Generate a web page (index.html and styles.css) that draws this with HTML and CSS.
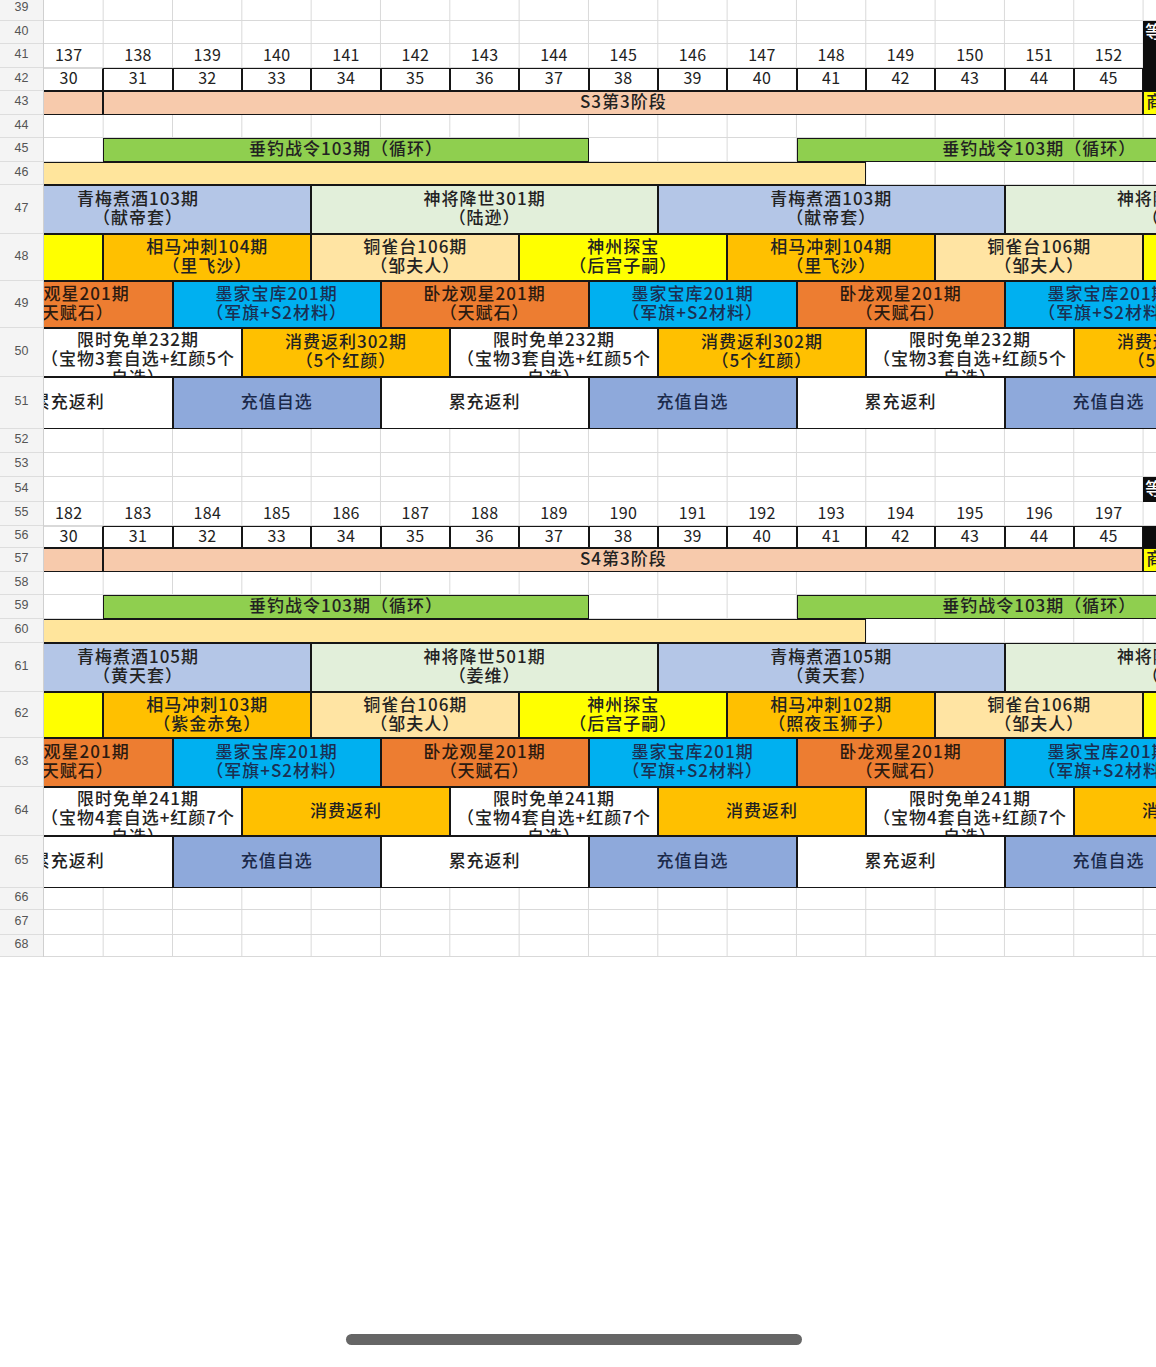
FILE: index.html
```html
<!DOCTYPE html>
<html lang="zh-CN">
<head>
<meta charset="utf-8">
<title>排期表</title>
<link rel="stylesheet" href="styles.css">
</head>
<body>
<div class="page">
  <div class="sheet">
    <div class="rowhdr">
      <div class="rh h24">39</div>
      <div class="rh h23">40</div>
      <div class="rh h24">41</div>
      <div class="rh h23">42</div>
      <div class="rh h24">43</div>
      <div class="rh h23">44</div>
      <div class="rh h24">45</div>
      <div class="rh h23">46</div>
      <div class="rh h49">47</div>
      <div class="rh h47">48</div>
      <div class="rh h47">49</div>
      <div class="rh h49">50</div>
      <div class="rh h52">51</div>
      <div class="rh h24">52</div>
      <div class="rh h24">53</div>
      <div class="rh h25">54</div>
      <div class="rh h24">55</div>
      <div class="rh h22">56</div>
      <div class="rh h24">57</div>
      <div class="rh h23">58</div>
      <div class="rh h24">59</div>
      <div class="rh h24">60</div>
      <div class="rh h49">61</div>
      <div class="rh h46">62</div>
      <div class="rh h49">63</div>
      <div class="rh h49">64</div>
      <div class="rh h52">65</div>
      <div class="rh h22">66</div>
      <div class="rh h25">67</div>
      <div class="rh h22">68</div>
    </div>
    <div class="viewport">
      <div class="grid">
        <!-- 39 -->
        <div class="row h24"></div>
        <!-- 40 -->
        <div class="row h23"><div class="s17"></div><div class="c blk edge">等级</div></div>
        <!-- 41 -->
        <div class="row h24">
          <div></div>
          <div class="c num">137</div><div class="c num">138</div><div class="c num">139</div><div class="c num">140</div>
          <div class="c num">141</div><div class="c num">142</div><div class="c num">143</div><div class="c num">144</div>
          <div class="c num">145</div><div class="c num">146</div><div class="c num">147</div><div class="c num">148</div>
          <div class="c num">149</div><div class="c num">150</div><div class="c num">151</div><div class="c num">152</div>
          <div class="c blk"></div>
        </div>
        <!-- 42 -->
        <div class="row h23">
          <div></div>
          <div class="c num b first">30</div><div class="c num b">31</div><div class="c num b">32</div><div class="c num b">33</div>
          <div class="c num b">34</div><div class="c num b">35</div><div class="c num b">36</div><div class="c num b">37</div>
          <div class="c num b">38</div><div class="c num b">39</div><div class="c num b">40</div><div class="c num b">41</div>
          <div class="c num b">42</div><div class="c num b">43</div><div class="c num b">44</div><div class="c num b">45</div>
          <div class="c blk"></div>
        </div>
        <!-- 43 -->
        <div class="row h24">
          <div></div>
          <div class="c b peach"></div>
          <div class="c b peach s15">S3第3阶段</div>
          <div class="c b yel edge">商店</div>
        </div>
        <!-- 44 -->
        <div class="row h23"></div>
        <!-- 45 -->
        <div class="row h24">
          <div></div><div></div>
          <div class="c b green s7">垂钓战令103期（循环）</div>
          <div></div><div></div><div></div>
          <div class="c b green s7">垂钓战令103期（循环）</div>
        </div>
        <!-- 46 -->
        <div class="row h23"><div class="c b gold s13"></div></div>
        <!-- 47 -->
        <div class="row h49">
          <div class="c b blue s5">青梅煮酒103期<br>（献帝套）</div>
          <div class="c b sage s5">神将降世301期<br>（陆逊）</div>
          <div class="c b blue s5">青梅煮酒103期<br>（献帝套）</div>
          <div class="c b sage s5">神将降世301期<br>（陆逊）</div>
        </div>
        <!-- 48 -->
        <div class="row h47">
          <div class="c b yel s2"></div>
          <div class="c b org s3">相马冲刺104期<br>（里飞沙）</div>
          <div class="c b tan s3">铜雀台106期<br>（邹夫人）</div>
          <div class="c b yel s3">神州探宝<br>（后宫子嗣）</div>
          <div class="c b org s3">相马冲刺104期<br>（里飞沙）</div>
          <div class="c b tan s3">铜雀台106期<br>（邹夫人）</div>
          <div class="c b yel s3">神州探宝<br>（后宫子嗣）</div>
        </div>
        <!-- 49 -->
        <div class="row h47">
          <div class="c b rust s3">卧龙观星201期<br>（天赋石）</div>
          <div class="c b cyan s3">墨家宝库201期<br>（军旗+S2材料）</div>
          <div class="c b rust s3">卧龙观星201期<br>（天赋石）</div>
          <div class="c b cyan s3">墨家宝库201期<br>（军旗+S2材料）</div>
          <div class="c b rust s3">卧龙观星201期<br>（天赋石）</div>
          <div class="c b cyan s3">墨家宝库201期<br>（军旗+S2材料）</div>
        </div>
        <!-- 50 -->
        <div class="row h49">
          <div class="c b org"></div>
          <div class="c b wht s3 top">限时免单232期<br>（宝物3套自选+红颜5个<br>自选）</div>
          <div class="c b org s3">消费返利302期<br>（5个红颜）</div>
          <div class="c b wht s3 top">限时免单232期<br>（宝物3套自选+红颜5个<br>自选）</div>
          <div class="c b org s3">消费返利302期<br>（5个红颜）</div>
          <div class="c b wht s3 top">限时免单232期<br>（宝物3套自选+红颜5个<br>自选）</div>
          <div class="c b org s3">消费返利302期<br>（5个红颜）</div>
        </div>
        <!-- 51 -->
        <div class="row h52">
          <div class="c b wht s3">累充返利</div>
          <div class="c b navy s3">充值自选</div>
          <div class="c b wht s3">累充返利</div>
          <div class="c b navy s3">充值自选</div>
          <div class="c b wht s3">累充返利</div>
          <div class="c b navy s3">充值自选</div>
        </div>
        <!-- 52 -->
        <div class="row h24"></div>
        <!-- 53 -->
        <div class="row h24"></div>
        <!-- 54 -->
        <div class="row h25"><div class="s17"></div><div class="c blk edge">等级</div></div>
        <!-- 55 -->
        <div class="row h24">
          <div></div>
          <div class="c num">182</div><div class="c num">183</div><div class="c num">184</div><div class="c num">185</div>
          <div class="c num">186</div><div class="c num">187</div><div class="c num">188</div><div class="c num">189</div>
          <div class="c num">190</div><div class="c num">191</div><div class="c num">192</div><div class="c num">193</div>
          <div class="c num">194</div><div class="c num">195</div><div class="c num">196</div><div class="c num">197</div>
        </div>
        <!-- 56 -->
        <div class="row h22">
          <div></div>
          <div class="c num b first">30</div><div class="c num b">31</div><div class="c num b">32</div><div class="c num b">33</div>
          <div class="c num b">34</div><div class="c num b">35</div><div class="c num b">36</div><div class="c num b">37</div>
          <div class="c num b">38</div><div class="c num b">39</div><div class="c num b">40</div><div class="c num b">41</div>
          <div class="c num b">42</div><div class="c num b">43</div><div class="c num b">44</div><div class="c num b">45</div>
          <div class="c blk"></div>
        </div>
        <!-- 57 -->
        <div class="row h24">
          <div></div>
          <div class="c b peach"></div>
          <div class="c b peach s15">S4第3阶段</div>
          <div class="c b yel edge">商店</div>
        </div>
        <!-- 58 -->
        <div class="row h23"></div>
        <!-- 59 -->
        <div class="row h24">
          <div></div><div></div>
          <div class="c b green s7">垂钓战令103期（循环）</div>
          <div></div><div></div><div></div>
          <div class="c b green s7">垂钓战令103期（循环）</div>
        </div>
        <!-- 60 -->
        <div class="row h24"><div class="c b gold s13"></div></div>
        <!-- 61 -->
        <div class="row h49">
          <div class="c b blue s5">青梅煮酒105期<br>（黄天套）</div>
          <div class="c b sage s5">神将降世501期<br>（姜维）</div>
          <div class="c b blue s5">青梅煮酒105期<br>（黄天套）</div>
          <div class="c b sage s5">神将降世501期<br>（姜维）</div>
        </div>
        <!-- 62 -->
        <div class="row h46">
          <div class="c b yel s2"></div>
          <div class="c b org s3">相马冲刺103期<br>（紫金赤兔）</div>
          <div class="c b tan s3">铜雀台106期<br>（邹夫人）</div>
          <div class="c b yel s3">神州探宝<br>（后宫子嗣）</div>
          <div class="c b org s3">相马冲刺102期<br>（照夜玉狮子）</div>
          <div class="c b tan s3">铜雀台106期<br>（邹夫人）</div>
          <div class="c b yel s3">神州探宝<br>（后宫子嗣）</div>
        </div>
        <!-- 63 -->
        <div class="row h49">
          <div class="c b rust s3">卧龙观星201期<br>（天赋石）</div>
          <div class="c b cyan s3">墨家宝库201期<br>（军旗+S2材料）</div>
          <div class="c b rust s3">卧龙观星201期<br>（天赋石）</div>
          <div class="c b cyan s3">墨家宝库201期<br>（军旗+S2材料）</div>
          <div class="c b rust s3">卧龙观星201期<br>（天赋石）</div>
          <div class="c b cyan s3">墨家宝库201期<br>（军旗+S2材料）</div>
        </div>
        <!-- 64 -->
        <div class="row h49">
          <div class="c b org"></div>
          <div class="c b wht s3 top">限时免单241期<br>（宝物4套自选+红颜7个<br>自选）</div>
          <div class="c b org s3">消费返利</div>
          <div class="c b wht s3 top">限时免单241期<br>（宝物4套自选+红颜7个<br>自选）</div>
          <div class="c b org s3">消费返利</div>
          <div class="c b wht s3 top">限时免单241期<br>（宝物4套自选+红颜7个<br>自选）</div>
          <div class="c b org s3">消费返利</div>
        </div>
        <!-- 65 -->
        <div class="row h52">
          <div class="c b wht s3">累充返利</div>
          <div class="c b navy s3">充值自选</div>
          <div class="c b wht s3">累充返利</div>
          <div class="c b navy s3">充值自选</div>
          <div class="c b wht s3">累充返利</div>
          <div class="c b navy s3">充值自选</div>
        </div>
        <!-- 66-68 -->
        <div class="row h22"></div>
        <div class="row h25"></div>
        <div class="row h22"></div>
      </div>
    </div>
  </div>
  <div class="homebar"></div>
</div>
</body>
</html>
```

FILE: styles.css
```css
* { box-sizing: border-box; }

body {
  margin: 0;
  background: #ffffff;
  font-family: "Noto Sans CJK SC", "Noto Sans", sans-serif;
  color: #222222;
}

.page {
  width: 1156px;
  height: 1367px;
  overflow: hidden;
}

.sheet {
  display: flex;
  margin-top: -3px;
}

.rowhdr {
  width: 44px;
  flex: none;
  background: #f4f4f4;
  border-right: 1px solid #d0d0d0;
}

.rh {
  display: flex;
  align-items: center;
  justify-content: center;
  font-family: "Liberation Sans", "Noto Sans", sans-serif;
  font-size: 12.5px;
  color: #555555;
  border-bottom: 1px solid #dddddd;
  padding-bottom: 3px;
}

.viewport {
  flex: 1;
  overflow: hidden;
}

.grid {
  width: 1526px;
  margin-left: -79.33px;
}

.row {
  display: grid;
  grid-template-columns: repeat(22, 69.33px);
  background-image:
    linear-gradient(to bottom, transparent calc(100% - 1px), #d9d9d9 0),
    linear-gradient(to right, transparent 68.3px, #d9d9d9 0);
  background-size: 100% 100%, 69.33px 100%;
  background-repeat: no-repeat, repeat-x;
}

.h22 { height: 22px; }
.h23 { height: 23px; }
.h24 { height: 24px; }
.h25 { height: 25px; }
.h46 { height: 46px; }
.h47 { height: 47px; }
.h49 { height: 49px; }
.h52 { height: 52px; }

.s2 { grid-column: span 2; }
.s3 { grid-column: span 3; }
.s5 { grid-column: span 5; }
.s7 { grid-column: span 7; }
.s13 { grid-column: span 13; }
.s15 { grid-column: span 15; }
.s17 { grid-column: span 17; }

.c {
  display: flex;
  align-items: center;
  justify-content: center;
  text-align: center;
  overflow: hidden;
  white-space: nowrap;
  font-size: 17px;
  font-weight: 500;
  letter-spacing: 1px;
  line-height: 19px;
  padding-bottom: 5px;
}

.c.top {
  align-items: flex-start;
  padding-bottom: 0;
}

.c.num {
  overflow: visible;
  font-size: 16px;
  font-weight: 400;
  letter-spacing: 0.3px;
  line-height: 15px;
  padding-bottom: 4px;
}

.b { border: 1px solid #161616; }

.b.first { border-top-color: #d9d9d9; }

.edge {
  justify-content: flex-start;
  padding-left: 2px;
}

.blk { background: #0d0d0d; color: #ffffff; }
.peach { background: #f7caac; }
.green { background: #8fcf4f; }
.gold { background: #ffe59c; }
.tan { background: #ffe4a3; }
.blue { background: #b4c6e7; }
.sage { background: #e2efda; }
.yel { background: #ffff00; }
.org { background: #ffc000; }
.rust { background: #ed7d31; color: #2b1a10; }
.cyan { background: #00b0f0; color: #1b2f52; }
.wht { background: #ffffff; }
.navy { background: #8ea9db; color: #1b2a4a; }

.homebar {
  width: 456px;
  height: 11px;
  margin: 377px 0 0 346px;
  border-radius: 6px;
  background: #666666;
}
```
